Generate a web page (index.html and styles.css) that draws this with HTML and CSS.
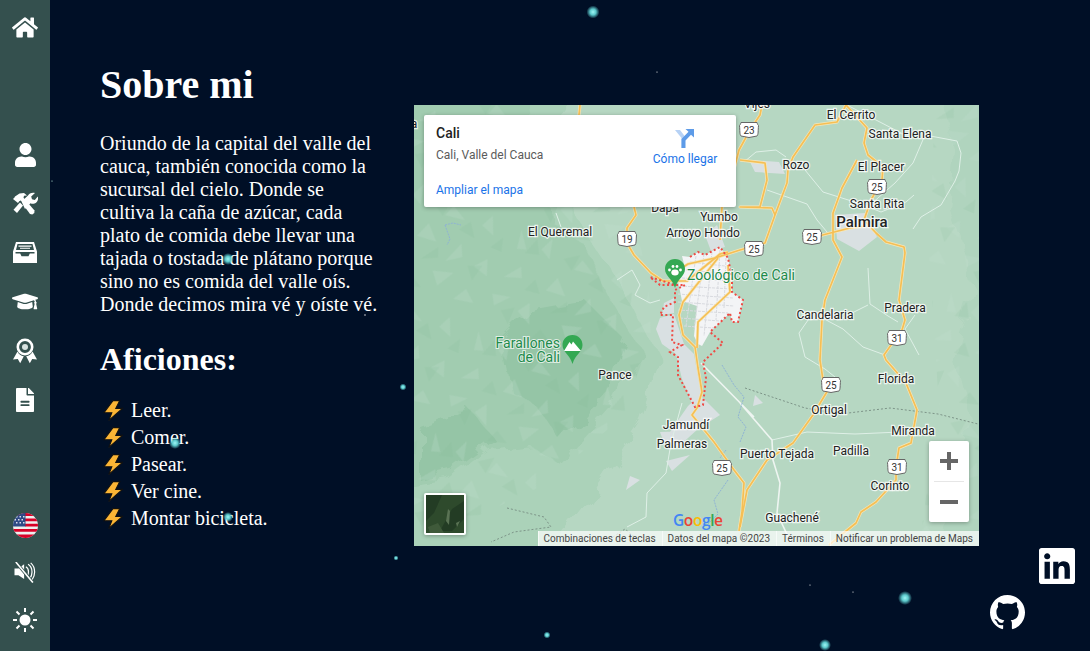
FILE: index.html
```html
<!DOCTYPE html>
<html lang="en">
<head>
    <meta charset="UTF-8">
    <meta name="viewport" content="width=device-width, initial-scale=1.0">
    <title>Sobre mi</title>
    <link rel="stylesheet" href="styles.css">
</head>
<body>
    <!-- Star field -->
    <svg class="stars" viewBox="0 0 1090 651">
        <defs>
            <radialGradient id="glow">
                <stop offset="0" stop-color="#9ff5f5"/>
                <stop offset="0.45" stop-color="#5cc9cc"/>
                <stop offset="1" stop-color="#5cc9cc" stop-opacity="0"/>
            </radialGradient>
        </defs>
        <circle cx="593" cy="12" r="6.5" fill="url(#glow)"/>
        <circle cx="228" cy="259" r="6" fill="url(#glow)"/>
        <circle cx="175" cy="443" r="6" fill="url(#glow)"/>
        <circle cx="228" cy="517" r="5" fill="url(#glow)"/>
        <circle cx="905" cy="598" r="7" fill="url(#glow)"/>
        <circle cx="825" cy="645" r="6" fill="url(#glow)"/>
        <circle cx="547" cy="635" r="3.5" fill="url(#glow)"/>
        <circle cx="403" cy="387" r="3.5" fill="url(#glow)"/>
        <circle cx="396" cy="558" r="2.5" fill="url(#glow)"/>
        <circle cx="657" cy="72" r="0.6" fill="#fff"/>
        <circle cx="52" cy="181" r="0.6" fill="#cfe"/>
        <circle cx="365" cy="315" r="0.7" fill="#fff"/>
        <circle cx="810" cy="585" r="0.6" fill="#fff"/>
        <circle cx="853" cy="592" r="0.6" fill="#fff"/>
    </svg>

    <nav class="sidebar">
        <a class="side-link" href="#">
            <svg width="26" height="23" viewBox="0 0 576 512"><path d="M280.37 148.26L96 300.11V464a16 16 0 0 0 16 16l112.06-.29a16 16 0 0 0 15.92-16V368a16 16 0 0 1 16-16h64a16 16 0 0 1 16 16v95.64a16 16 0 0 0 16 16.05L464 480a16 16 0 0 0 16-16V300L295.67 148.26a12.19 12.19 0 0 0-15.3 0zM571.6 251.47L488 182.56V44.05a12 12 0 0 0-12-12h-56a12 12 0 0 0-12 12v72.61L318.47 43a48 48 0 0 0-61 0L4.34 251.47a12 12 0 0 0-1.6 16.9l25.5 31A12 12 0 0 0 45.15 301l235.22-193.74a12.19 12.19 0 0 1 15.3 0L530.9 301a12 12 0 0 0 16.9-1.6l25.5-31a12 12 0 0 0-1.7-16.93z"/></svg>
        </a>

        <div class="side-group">
            <a class="side-link" href="#">
                <svg width="21" height="24" viewBox="0 0 448 512"><path d="M224 256c70.7 0 128-57.3 128-128S294.7 0 224 0 96 57.3 96 128s57.3 128 128 128zm89.6 32h-16.7c-22.2 10.2-46.9 16-72.9 16s-50.6-5.8-72.9-16h-16.7C60.2 288 0 348.2 0 422.4V464c0 26.5 21.5 48 48 48h352c26.5 0 48-21.5 48-48v-41.6c0-74.2-60.2-134.4-134.4-134.4z"/></svg>
            </a>
            <a class="side-link" href="#">
                <svg width="26" height="24" viewBox="0 0 26 24">
                    <path d="M3 4.5 7.5 1.500 12 1l3 2.500-3 .3-.5 2 1.800 2-2.600 2.600-2-1.800-1.500.6L6 11 1 7l1.500-1.500z"/>
                    <path d="M8 10.500l3 3-6 7.500-3.500-3.300z"/>
                    <path d="M12.500 14.500l3.500-3.500 6.500 7.500-.2 2.500-2 1.500-2.300-.5z"/>
                    <path d="M9.500 9.500 16 3.500c1-2 4-3.500 7-2.500l-3.800 3.500.8 2.800 2.800.7 3-3.500c1 3-.8 6-3.300 7-1.500.6-3 .3-4-.3l-5.500 5.800z"/>
                </svg>
            </a>
            <a class="side-link" href="#">
                <svg width="24" height="21" viewBox="0 0 24 21">
                    <path fill-rule="evenodd" d="M3 0h18l3 9.500V21H0V9.500zM4.500 2 3 8h18l-1.500-6zM2.500 10v1.500h4.700l1.300 2.700h7l1.300-2.700h4.700V10z"/>
                    <path d="M5.500 3.500h13v1.300h-13zM7 5.800h10v1H7z"/>
                </svg>
            </a>
            <a class="side-link" href="#">
                <svg width="26" height="21" viewBox="0 0 640 512"><path transform="matrix(-1 0 0 1 640 0)" d="M622.34 153.2L343.4 67.5c-15.2-4.67-31.6-4.67-46.79 0L17.66 153.2c-23.54 7.23-23.54 38.36 0 45.59l48.63 14.94c-10.67 13.19-17.23 29.28-17.88 46.9C38.78 266.15 32 276.11 32 288c0 10.78 5.68 19.85 13.86 25.65L20.33 428.53C18.11 438.52 25.71 448 35.94 448h56.11c10.24 0 17.84-9.48 15.62-19.47L82.14 313.65C90.32 307.85 96 298.78 96 288c0-11.57-6.47-21.25-15.66-26.87.76-15.02 8.44-28.3 20.69-36.72L296.6 284.5c9.06 2.78 26.44 6.25 46.79 0l278.95-85.7c23.55-7.24 23.55-38.36 0-45.6zM352.79 315.09c-28.53 8.76-52.84 3.92-65.59 0l-145.02-44.55L128 384c0 35.35 85.96 64 192 64s192-28.65 192-64l-14.18-113.47-145.03 44.56z"/></svg>
            </a>
            <a class="side-link" href="#">
                <svg width="24" height="26" viewBox="0 0 24 26">
                    <circle cx="12" cy="9" r="7.200" fill="none" stroke="#fff" stroke-width="2.600"/>
                    <circle cx="12" cy="9" r="3" fill="#d8e2e0"/>
                    <path d="M4.500 13.500 0 21.500l4.800-.6 2.400 4.300L10.800 18.300c-2.800-.2-5-2-6.300-4.800zM19.500 13.500 24 21.500l-4.800-.6-2.400 4.300-3.600-6.900c2.800-.2 5-2 6.300-4.800z"/>
                </svg>
            </a>
            <a class="side-link" href="#">
                <svg width="18" height="24" viewBox="0 0 384 512"><path d="M224 136V0H24C10.700 0 0 10.700 0 24v464c0 13.300 10.700 24 24 24h336c13.300 0 24-10.700 24-24V160H248c-13.200 0-24-10.800-24-24zm64 236c0 6.600-5.400 12-12 12H108c-6.600 0-12-5.400-12-12v-16c0-6.600 5.400-12 12-12h168c6.600 0 12 5.400 12 12v16zm0-72c0 6.600-5.400 12-12 12H108c-6.600 0-12-5.400-12-12v-16c0-6.600 5.400-12 12-12h168c6.600 0 12 5.400 12 12v16zm96-178.100v6.100H256V0h6.100c6.400 0 12.500 2.500 17 7l97.900 98c4.500 4.500 7 10.600 7 16.900z"/></svg>
            </a>
        </div>

        <div class="side-group side-bottom">
            <a class="side-link" href="#">
                <svg width="25" height="25" viewBox="0 0 25 25">
                    <clipPath id="flagClip"><circle cx="12.500" cy="12.500" r="12.500"/></clipPath>
                    <g clip-path="url(#flagClip)">
                        <rect width="25" height="25" fill="#eeeeee"/>
                        <path d="M0 0h25v3H0zM12 5.400h13v2.800H12zM12 10.700h13v2.800H12zM0 16h25v2.800H0zM0 21.400h25V25H0z" fill="#d80027"/>
                        <rect width="12.500" height="13.500" fill="#2e4a86"/>
                        <path d="M3 3h1.500v1.500H3zM6.500 3H8v1.500H6.500zM10 3h1.500v1.500H10zM1.500 6H3v1.500H1.500zM5 6h1.500v1.500H5zM8.500 6H10v1.500H8.500zM3 9h1.500v1.500H3zM6.500 9H8v1.500H6.500zM10 9h1.500v1.500H10z" fill="#dde"/>
                    </g>
                </svg>
            </a>
            <a class="side-link" href="#">
                <svg width="24" height="21" viewBox="0 0 24 24">
                    <path d="M0 7.500h4.500L11 2.500v16.800L4.500 15H0z"/>
                    <path d="M13 5.500c1.800 1 3 3.200 3 6s-.8 4-2 5M15.500 2.500c3 1.800 4.500 5 4.500 9 0 3-1 5.500-2.500 7.500M18.500 1c3 2.500 4.500 6.300 4.500 10.500 0 3.500-1 6.500-3 9" fill="none" stroke="#fff" stroke-width="1.400"/>
                    <path d="M1.500 0 21 23.500" stroke="#34504e" stroke-width="3.500"/>
                    <path d="M1.500 0 21 23.500" stroke="#fff" stroke-width="1.800"/>
                </svg>
            </a>
            <a class="side-link" href="#">
                <svg width="24" height="24" viewBox="0 0 24 24">
                    <circle cx="12" cy="12" r="5.500"/>
                    <path d="M12 0v4M12 20v4M0 12h4M20 12h4M3.500 3.500l3 3M17.500 17.500l3 3M20.500 3.500l-3 3M6.500 17.500l-3 3" stroke="#fff" stroke-width="2"/>
                </svg>
            </a>
        </div>
    </nav>

    <main class="content">
        <section class="about">
            <h1>Sobre mi</h1>
            <p>Oriundo de la capital del valle del cauca, también conocida como la sucursal del cielo. Donde se cultiva la caña de azúcar, cada plato de comida debe llevar una tajada o tostada de plátano porque sino no es comida del valle oís. Donde decimos mira vé y oíste vé.</p>
            <h2>Aficiones:</h2>
            <ul class="hobbies">
                <li><svg class="bolt" viewBox="0 0 20 21"><path d="M10 .6h6.800L12.800 8.400h6.700L5.800 20.400 8.800 12.800H.8z"/></svg>Leer.</li>
                <li><svg class="bolt" viewBox="0 0 20 21"><path d="M10 .6h6.800L12.800 8.400h6.700L5.800 20.400 8.800 12.800H.8z"/></svg>Comer.</li>
                <li><svg class="bolt" viewBox="0 0 20 21"><path d="M10 .6h6.800L12.800 8.400h6.700L5.800 20.400 8.800 12.800H.8z"/></svg>Pasear.</li>
                <li><svg class="bolt" viewBox="0 0 20 21"><path d="M10 .6h6.800L12.800 8.400h6.700L5.800 20.400 8.800 12.800H.8z"/></svg>Ver cine.</li>
                <li><svg class="bolt" viewBox="0 0 20 21"><path d="M10 .6h6.800L12.800 8.400h6.700L5.800 20.400 8.800 12.800H.8z"/></svg>Montar bicicleta.</li>
            </ul>
        </section>

        <div class="map">
            <svg class="map-art" viewBox="414 105 565 441">
                <defs>
                    <filter id="rough" x="-10%" y="-10%" width="120%" height="120%">
                        <feTurbulence type="fractalNoise" baseFrequency="0.035" numOctaves="3" seed="7" result="noise"/>
                        <feDisplacementMap in="SourceGraphic" in2="noise" scale="26"/>
                    </filter>
                    <pattern id="facets" width="140" height="110" patternUnits="userSpaceOnUse" patternTransform="rotate(23)">
                        <path class="fa" d="M10 8l12 16-9 3zM42 4l5 20-11-6zM78 12l16 9-20 3zM118 6l8 18-14-5zM24 42l-12 16 17-6zM62 38l14 14-20 2zM100 44l-8 22 14-10zM130 48l6 16-16-4zM8 78l18-4-12 14zM46 72l8 20-16-8zM84 80l20-6-10 18zM122 84l12 10-20 4z"/>
                        <path class="fb" d="M28 10l8 14-14 4zM60 18l14-10-2 18zM100 20l10 14-18-2zM42 48l10 12-16 2zM80 56l-12 18 16-8zM114 62l14-6-4 18zM22 90l12-8 0 18zM66 92l14 8-20 6zM136 22l-8 14 12 0z"/>
                    </pattern>
                    <path id="shieldShape" d="M-8-7.500h16c.5 2 1 2.500 1.500 3-.5 5 0 9-1.500 10.500-3 .5-5 1-8 1.500-3-.5-5-1-8-1.500-1.500-1.500-1-5.500-1.500-10.500.5-.5 1-1 1.500-3z" fill="#fff" stroke="#666" stroke-width="1"/>
                    <g id="highways">
                        <path d="M846 105l21 23-3 15 4 12 15 12-1 13-11 20-7 20 12 13 10 9 18 5 1 6-6 47 6 20-3 10-6 8-12 17 2 5 20 23 11 27-6 33-12 5-3 19v13l-20 22-15 10-5 11-27 22"/>
                        <path d="M846 105l-9 17-22 3-22 32-5 13-1 13-12 32-10 28-25 7-25 8-27 6-16 10"/>
                        <path d="M803 240l47-12 15-2M857 160l-15 28-9 25v27l9 17-17 43-3 20-2 40 3 20 8 5-18 30-20 28-26 17-20 30-7 37"/>
                        <path d="M740 160l25 3 2 17-7 27-20 0 32 1 3 7M762 105l-2 10-10 15-11 20-9 35-8 22-2 33"/>
                        <path d="M580 105l-1 10M634 207l2 8-9 13v15l7 12 17 18 12 8 24 0 33-27 8-2"/>
                        <path d="M728 265l2 27-32 30-1 26M718 258l-35 44-4 13 4 20 12 12 3 21 4 24-5 16-5 7 22 27 20 28 10 13-2 29-3 19"/>
                    </g>
                </defs>

                <rect x="414" y="105" width="565" height="441" fill="#b6d7c2"/>

                <!-- Terrain -->
                <g filter="url(#rough)">
                    <path class="t1" d="M390 90h170l10 110 20 40 40 60 30 60-20 60-60 90-50 60-140 20z"/>
                    <path class="t2" d="M390 90h140l20 130 30 20 30 60 30 50-30 60-50 55-30-20-40 5-40 30-60 10z"/>
                    <path class="t3" d="M530 310l55-10 40 40-20 50-45 50-20-30-30-20-10-50zM420 430l50-20 25 30-40 30-35 10z"/>
                    <path class="t4" d="M940 90h50v470h-60l15-70 25-70-15-60 20-70-25-80 5-60z"/>
                </g>
                <path class="facet-layer" d="M414 205h220l20 120-30 90-80 70-130 61z"/>
                <path class="facet-layer" d="M414 105h170v100H414z"/>
                <path class="facet-layer facet-right" d="M935 105h44v441h-60l20-140-10-150z"/>

                <!-- Towns -->
                <path class="urban-soft" d="M660 318l14-4 10 30 10 10 8 45-8 10-12-30-6-25-14-10-6-15zM664 303l10-5 0 15-12 2zM700 395l20 20-22 14-20 18-14-6 10-15 14-20zM835 215l30-2 12 24-18 14-22-12zM705 235l12-10 8 22-14 4zM749 160l30 2 6 12-30-2zM660 432l30-1-8 12h-18zM690 455l-18 16-6-10zM755 395l8 8-10 3zM640 480l-14 10 4-14z"/>
                <path class="urban" d="M690 257l8-5 7 3 15-8 8 11 4 20v14l11 8-3 13-2 9-6 0-2-9-20 19-8 14-4-2-4-8 3-30-15-5-4-20 6-17-2-8z"/>
                <path class="streets" d="M690 262l35 4M686 270l44 4M682 278l50 3M680 286l52 3M678 294l55 4M678 302l56 4M678 310l50 3M680 318l40 3M684 326l30 2M696 256l-10 70M704 254l-10 76M712 252l-8 84M720 250l-4 70M726 258l-2 50"/>

                <!-- White roads -->
                <g class="road-minor">
                    <path d="M682 403l-11 40-5 30-19 20-1 24-19 10M772 440l35-8 48 2 45-2"/>
                    <path d="M786 157l-10-7-20 2-12 10M805 170l18 22 38 12 20 8 25-10 8-7M870 205l25-22 18-20 12-28 32 6 4 12-2 18-4 10-14 24-20 12-8 12M882 130l26 5M847 105l58 30"/>
                    <path d="M868 268l2 36 18 12 10 6M868 305l-30 15-28-8M767 190l40 14 10 16 10 12M885 355l-22-8-20-18-30-16-14 20 6 24 20 12 10 8M915 315l-10 14 14 26"/>
                    <path d="M556 213l5 14M617 280l15-10 8 15-5 10 15 8 10-3"/>
                </g>
                <path class="road-wide" d="M701 363l53 54M740 403l32 37 1 20 7 23-3 30 14 30"/>

                <!-- Borders and rivers -->
                <path class="border" d="M507 508l37 9 7 10-37 5-23 10M613 537l12-8 12 10M745 388l60 20 35 6 50-6 48 6 40 10 17 8"/>
                <path class="river" d="M722 365l12 20 10 12-6 20 8 10-6 15M726 450l-6 8M728 480l-14 20 4 14-10 10M445 225l8-2 8 2M445 225l5 14-3 6"/>

                <!-- Highways -->
                <use class="road-case" href="#highways"/>
                <use class="road-core" href="#highways"/>
                <path class="limit" d="M690 257l8-5 7 3 15-8 8 11 4 20v14l11 8-3 13-2 9-6 0-2-9-20 19 13 11-20 19 3 16-3 27-8 2-17-32v-18l-8-5 12-7-10-3 1-27-13 0 4-8 11-5v-12l10-5-25 0-10-8 25 8"/>

                <!-- Route shields -->
                <g class="shield" transform="translate(749 130)"><use href="#shieldShape"/><text y="3.500">23</text></g>
                <g class="shield" transform="translate(627 239)"><use href="#shieldShape"/><text y="3.500">19</text></g>
                <g class="shield" transform="translate(754 249)"><use href="#shieldShape"/><text y="3.500">25</text></g>
                <g class="shield" transform="translate(812 237)"><use href="#shieldShape"/><text y="3.500">25</text></g>
                <g class="shield" transform="translate(877 187)"><use href="#shieldShape"/><text y="3.500">25</text></g>
                <g class="shield" transform="translate(897 338)"><use href="#shieldShape"/><text y="3.500">31</text></g>
                <g class="shield" transform="translate(831 385)"><use href="#shieldShape"/><text y="3.500">25</text></g>
                <g class="shield" transform="translate(897 467)"><use href="#shieldShape"/><text y="3.500">31</text></g>
                <g class="shield" transform="translate(722 468)"><use href="#shieldShape"/><text y="3.500">25</text></g>

                <!-- Place names -->
                <g class="place">
                    <text x="757" y="108">Vijes</text>
                    <text x="851" y="119">El Cerrito</text>
                    <text x="900" y="138">Santa Elena</text>
                    <text x="796" y="169">Rozo</text>
                    <text x="881" y="171">El Placer</text>
                    <text x="877" y="208">Santa Rita</text>
                    <text x="825" y="319">Candelaria</text>
                    <text x="905" y="312">Pradera</text>
                    <text x="665" y="212">Dapa</text>
                    <text x="719" y="221">Yumbo</text>
                    <text x="703" y="237">Arroyo Hondo</text>
                    <text x="560" y="236">El Queremal</text>
                    <text x="615" y="379">Pance</text>
                    <text x="686" y="429">Jamundí</text>
                    <text x="682" y="448">Palmeras</text>
                    <text x="777" y="458">Puerto Tejada</text>
                    <text x="851" y="455">Padilla</text>
                    <text x="829" y="414">Ortigal</text>
                    <text x="896" y="383">Florida</text>
                    <text x="913" y="435">Miranda</text>
                    <text x="890" y="490">Corinto</text>
                    <text x="792" y="522">Guachené</text>
                    <text x="414" y="128">a</text>
                </g>
                <text class="place-big" x="862" y="227">Palmira</text>
                <text class="poi" x="687" y="280">Zoológico de Cali</text>
                <text class="poi poi-end" x="560" y="348">Farallones</text>
                <text class="poi poi-end" x="560" y="362">de Cali</text>

                <!-- Pins -->
                <path class="pin" d="M675 259c-6 0-10 4.500-10 10 0 7 7 9 10 19 3-10 10-12 10-19 0-5.500-4-10-10-10z"/>
                <g fill="#fff"><ellipse cx="675" cy="272.500" rx="3.700" ry="3"/><circle cx="669.500" cy="270" r="1.400"/><circle cx="673" cy="266.500" r="1.400"/><circle cx="677" cy="266.500" r="1.400"/><circle cx="680.500" cy="270" r="1.400"/></g>
                <path class="pin" d="M572.500 335c-6 0-10 4.500-10 10 0 7 7 9 10 19 3-10 10-12 10-19 0-5.500-4-10-10-10z"/>
                <path d="M564 351l5.500-9 2 2.500 1.500-3 8 9.500z" fill="#fff"/>
            </svg>

            <div class="place-card">
                <div class="card-text">
                    <div class="card-title">Cali</div>
                    <div class="card-address">Cali, Valle del Cauca</div>
                    <a class="card-link" href="#">Ampliar el mapa</a>
                </div>
                <a class="directions" href="#">
                    <svg width="20" height="20" viewBox="0 0 20 20">
                        <path d="M0 2h5l5 6.500V20H6.500V10z" fill="#b7d2f5"/>
                        <path d="M19 1v8.500l-3-2.800-5.500 5.800V20H6.500v-9l7-7.200L10.500 1z" fill="#5d9be8"/>
                    </svg>
                    Cómo llegar
                </a>
            </div>

            <div class="map-type">
                <svg width="38" height="38" viewBox="0 0 38 38">
                    <rect width="38" height="38" fill="#2e4a2c"/>
                    <path d="M0 0h16L8 18 0 26zM26 14l12-8v18L26 36H14z" fill="#233c24"/>
                    <path d="M20 26l2-12 2 2-1 14zM30 28l4-2-3 6z" fill="#5a7354"/>
                    <path d="M2 32l10-4 6 10H4z" fill="#3f5a3a"/>
                </svg>
            </div>

            <div class="zoom-box">
                <div class="zoom-btn"><svg width="18" height="18" viewBox="0 0 18 18"><path d="M7 0h4v7h7v4h-7v7H7v-7H0V7h7z"/></svg></div>
                <div class="zoom-line"></div>
                <div class="zoom-btn"><svg width="18" height="18" viewBox="0 0 18 18"><path d="M0 7h18v4H0z"/></svg></div>
            </div>

            <div class="google-logo"><span class="g-blue">G</span><span class="g-red">o</span><span class="g-yellow">o</span><span class="g-blue">g</span><span class="g-green">l</span><span class="g-red">e</span></div>

            <div class="attribution">
                <span>Combinaciones de teclas</span>
                <span>Datos del mapa ©2023</span>
                <span>Términos</span>
                <span>Notificar un problema de Maps</span>
            </div>
        </div>
    </main>

    <a class="social linkedin" href="#">
        <svg width="36" height="36" viewBox="0 32 448 448"><path d="M416 32H31.900C14.300 32 0 46.500 0 64.300v383.400C0 465.500 14.300 480 31.900 480H416c17.600 0 32-14.500 32-32.300V64.300c0-17.800-14.400-32.300-32-32.300zM135.400 416H69V202.200h66.500V416zm-33.200-243c-21.300 0-38.500-17.300-38.500-38.500S80.900 96 102.200 96c21.200 0 38.500 17.300 38.500 38.500 0 21.300-17.200 38.500-38.500 38.500zm282.100 243h-66.400V312c0-24.800-.5-56.700-34.500-56.700-34.600 0-39.900 27-39.900 54.900V416h-66.400V202.200h63.700v29.200h.9c8.900-16.800 30.600-34.500 62.900-34.500 67.200 0 79.700 44.300 79.700 101.900V416z"/></svg>
    </a>
    <a class="social github" href="#">
        <svg width="35" height="35" viewBox="0 0 16 16"><path d="M8 0C3.580 0 0 3.580 0 8c0 3.540 2.290 6.530 5.470 7.590.4.070.55-.17.55-.38 0-.19-.01-.82-.01-1.490-2.010.37-2.530-.49-2.69-.94-.09-.23-.48-.94-.82-1.130-.28-.15-.68-.52-.01-.53.63-.01 1.080.58 1.230.82.72 1.210 1.870.87 2.330.66.07-.52.28-.87.51-1.070-1.780-.2-3.640-.89-3.640-3.950 0-.87.31-1.590.82-2.150-.08-.2-.36-1.020.08-2.120 0 0 .67-.21 2.200.82.64-.18 1.320-.27 2-.27.68 0 1.360.09 2 .27 1.530-1.040 2.200-.82 2.200-.82.44 1.100.16 1.920.08 2.120.51.56.82 1.270.82 2.150 0 3.070-1.870 3.750-3.650 3.950.29.25.54.73.54 1.480 0 1.070-.01 1.930-.01 2.200 0 .21.15.46.55.38A8.013 8.013 0 0016 8c0-4.420-3.580-8-8-8z"/></svg>
    </a>
</body>
</html>
```

FILE: styles.css
```css
html, body {
    height: 100%;
}

body {
    margin: 0;
    background-color: #000f26;
    color: #fff;
    font-family: "Liberation Serif", serif;
    font-size: 20px;
    display: flex;
    overflow: hidden;
    position: relative;
}

.stars {
    position: absolute;
    top: 0;
    left: 0;
    width: 1090px;
    height: 651px;
    z-index: 2;
    pointer-events: none;
}

/* Sidebar */
.sidebar {
    width: 50px;
    flex-shrink: 0;
    background-color: #34504e;
    display: flex;
    flex-direction: column;
    padding: 3px 0 8px;
    box-sizing: border-box;
    position: relative;
    z-index: 3;
}

.side-link {
    height: 49px;
    display: flex;
    align-items: center;
    justify-content: center;
}

.side-link svg {
    fill: #fff;
}

.side-group {
    margin-top: 78px;
}

.side-bottom {
    margin-top: auto;
}

.side-bottom .side-link {
    height: 47px;
}

/* Content */
.content {
    display: flex;
    gap: 34px;
    padding-left: 50px;
}

.about {
    width: 280px;
}

h1 {
    font-size: 40px;
    margin: 62px 0 24px;
    line-height: 46px;
}

.about p {
    margin: 0;
    line-height: 23px;
}

h2 {
    font-size: 32px;
    margin: 25px 0 19px;
    line-height: 37px;
}

.hobbies {
    list-style: none;
    margin: 0;
    padding: 0;
}

.hobbies li {
    display: flex;
    align-items: center;
    height: 27px;
}

.bolt {
    width: 20px;
    height: 21px;
    margin: 0 8px 0 3px;
    fill: #fbb535;
    stroke: #111;
    stroke-width: 1.100;
}

/* Map */
.map {
    width: 565px;
    height: 441px;
    margin-top: 105px;
    position: relative;
    font-family: Roboto, sans-serif;
    overflow: hidden;
}

.map-art {
    display: block;
    width: 565px;
    height: 441px;
}

.t1 { fill: #abd2b9; }
.t2 { fill: #a1ccb0; }
.t3 { fill: #95c5a6; }
.t4 { fill: #b0d4be; }

.fa { fill: #c4e0cf; opacity: 0.22; }
.fb { fill: #86b998; opacity: 0.16; }

.facet-layer {
    fill: url(#facets);
}

.facet-right {
    opacity: 0.9;
}

.urban { fill: #f3f4f6; }
.urban-soft { fill: #d9e0e2; }

.streets {
    fill: none;
    stroke: #d8dadf;
    stroke-width: 1;
    stroke-dasharray: 3 1;
}

.road-minor path {
    fill: none;
    stroke: #dff0e7;
    stroke-width: 1;
}

.road-wide {
    fill: none;
    stroke: #eef5f1;
    stroke-width: 1.600;
}

.border {
    fill: none;
    stroke: #7d9488;
    stroke-width: 1;
    stroke-dasharray: 2 2;
}

.river {
    fill: none;
    stroke: #8fb3d4;
    stroke-width: 1;
    stroke-dasharray: 2 1;
}

.road-case,
.road-core {
    fill: none;
    stroke-linejoin: round;
}

.road-case {
    stroke: #f6e7b8;
    stroke-width: 3;
}

.road-core {
    stroke: #f5bf55;
    stroke-width: 1.700;
}

.limit {
    fill: none;
    stroke: #ee4b45;
    stroke-width: 2;
    stroke-dasharray: 2 2.500;
}

.shield text {
    font-size: 10px;
    text-anchor: middle;
    fill: #333;
}

.place text {
    font-size: 12px;
    text-anchor: middle;
    fill: #222;
    stroke: #fff;
    stroke-width: 2.500;
    stroke-opacity: 0.75;
    paint-order: stroke;
}

.place-big {
    font-size: 15px;
    font-weight: 500;
    text-anchor: middle;
    fill: #222;
    stroke: #fff;
    stroke-width: 2.500;
    stroke-opacity: 0.75;
    paint-order: stroke;
}

.poi {
    font-size: 14px;
    fill: #1e8a4b;
    stroke: #fff;
    stroke-width: 2;
    stroke-opacity: 0.7;
    paint-order: stroke;
}

.poi-end {
    text-anchor: end;
}

.pin {
    fill: #34a853;
}

.place-card {
    position: absolute;
    top: 10px;
    left: 10px;
    width: 312px;
    height: 92px;
    background: #fff;
    border-radius: 2px;
    box-shadow: 0 1px 4px rgba(0, 0, 0, 0.3);
    box-sizing: border-box;
    padding: 10px 12px;
    display: flex;
    justify-content: space-between;
}

.card-title {
    font-size: 14px;
    font-weight: 500;
    color: #222;
    line-height: 17px;
}

.card-address {
    font-size: 12px;
    color: #5b5b5b;
    margin-top: 6px;
    line-height: 14px;
}

.card-link {
    display: block;
    margin-top: 21px;
    font-size: 12px;
    line-height: 14px;
    color: #1a73e8;
    text-decoration: none;
}

.directions {
    width: 72px;
    margin: 3px 3px 0 0;
    display: flex;
    flex-direction: column;
    align-items: center;
    gap: 4px;
    font-size: 12px;
    color: #1a73e8;
    text-decoration: none;
    white-space: nowrap;
}

.map-type {
    position: absolute;
    left: 10px;
    bottom: 11px;
    width: 38px;
    height: 38px;
    border: 2px solid #fff;
    border-radius: 2px;
    box-shadow: 0 1px 4px rgba(0, 0, 0, 0.3);
}

.map-type svg {
    display: block;
}

.zoom-box {
    position: absolute;
    top: 336px;
    right: 10px;
    width: 40px;
    height: 81px;
    background: #fff;
    border-radius: 2px;
    box-shadow: 0 1px 4px rgba(0, 0, 0, 0.3);
    display: flex;
    flex-direction: column;
    align-items: center;
}

.zoom-btn {
    flex: 1;
    display: flex;
    align-items: center;
    justify-content: center;
}

.zoom-btn svg {
    fill: #666;
}

.zoom-line {
    width: 30px;
    height: 1px;
    background: #e6e6e6;
}

.google-logo {
    position: absolute;
    left: 259px;
    bottom: 17px;
    font-family: "Open Sans", sans-serif;
    font-size: 15.500px;
    font-weight: 600;
    letter-spacing: -0.400px;
    line-height: 18px;
}

.g-blue { color: #4285f4; }
.g-red { color: #ea4335; }
.g-yellow { color: #fbbc05; }
.g-green { color: #34a853; }

.attribution {
    position: absolute;
    right: 0;
    bottom: 0;
    display: flex;
    height: 15px;
    font-size: 10px;
    line-height: 15px;
    color: #444;
    white-space: nowrap;
}

.attribution span {
    background: rgba(255, 255, 255, 0.7);
    padding: 0 6px 0 5px;
    border-left: 1px solid rgba(255, 255, 255, 0.6);
}

/* Social links */
.social {
    position: absolute;
    z-index: 3;
    display: block;
}

.social svg {
    display: block;
    fill: #fff;
}

.linkedin {
    left: 1039px;
    top: 548px;
}

.github {
    left: 990px;
    top: 595px;
}
```
